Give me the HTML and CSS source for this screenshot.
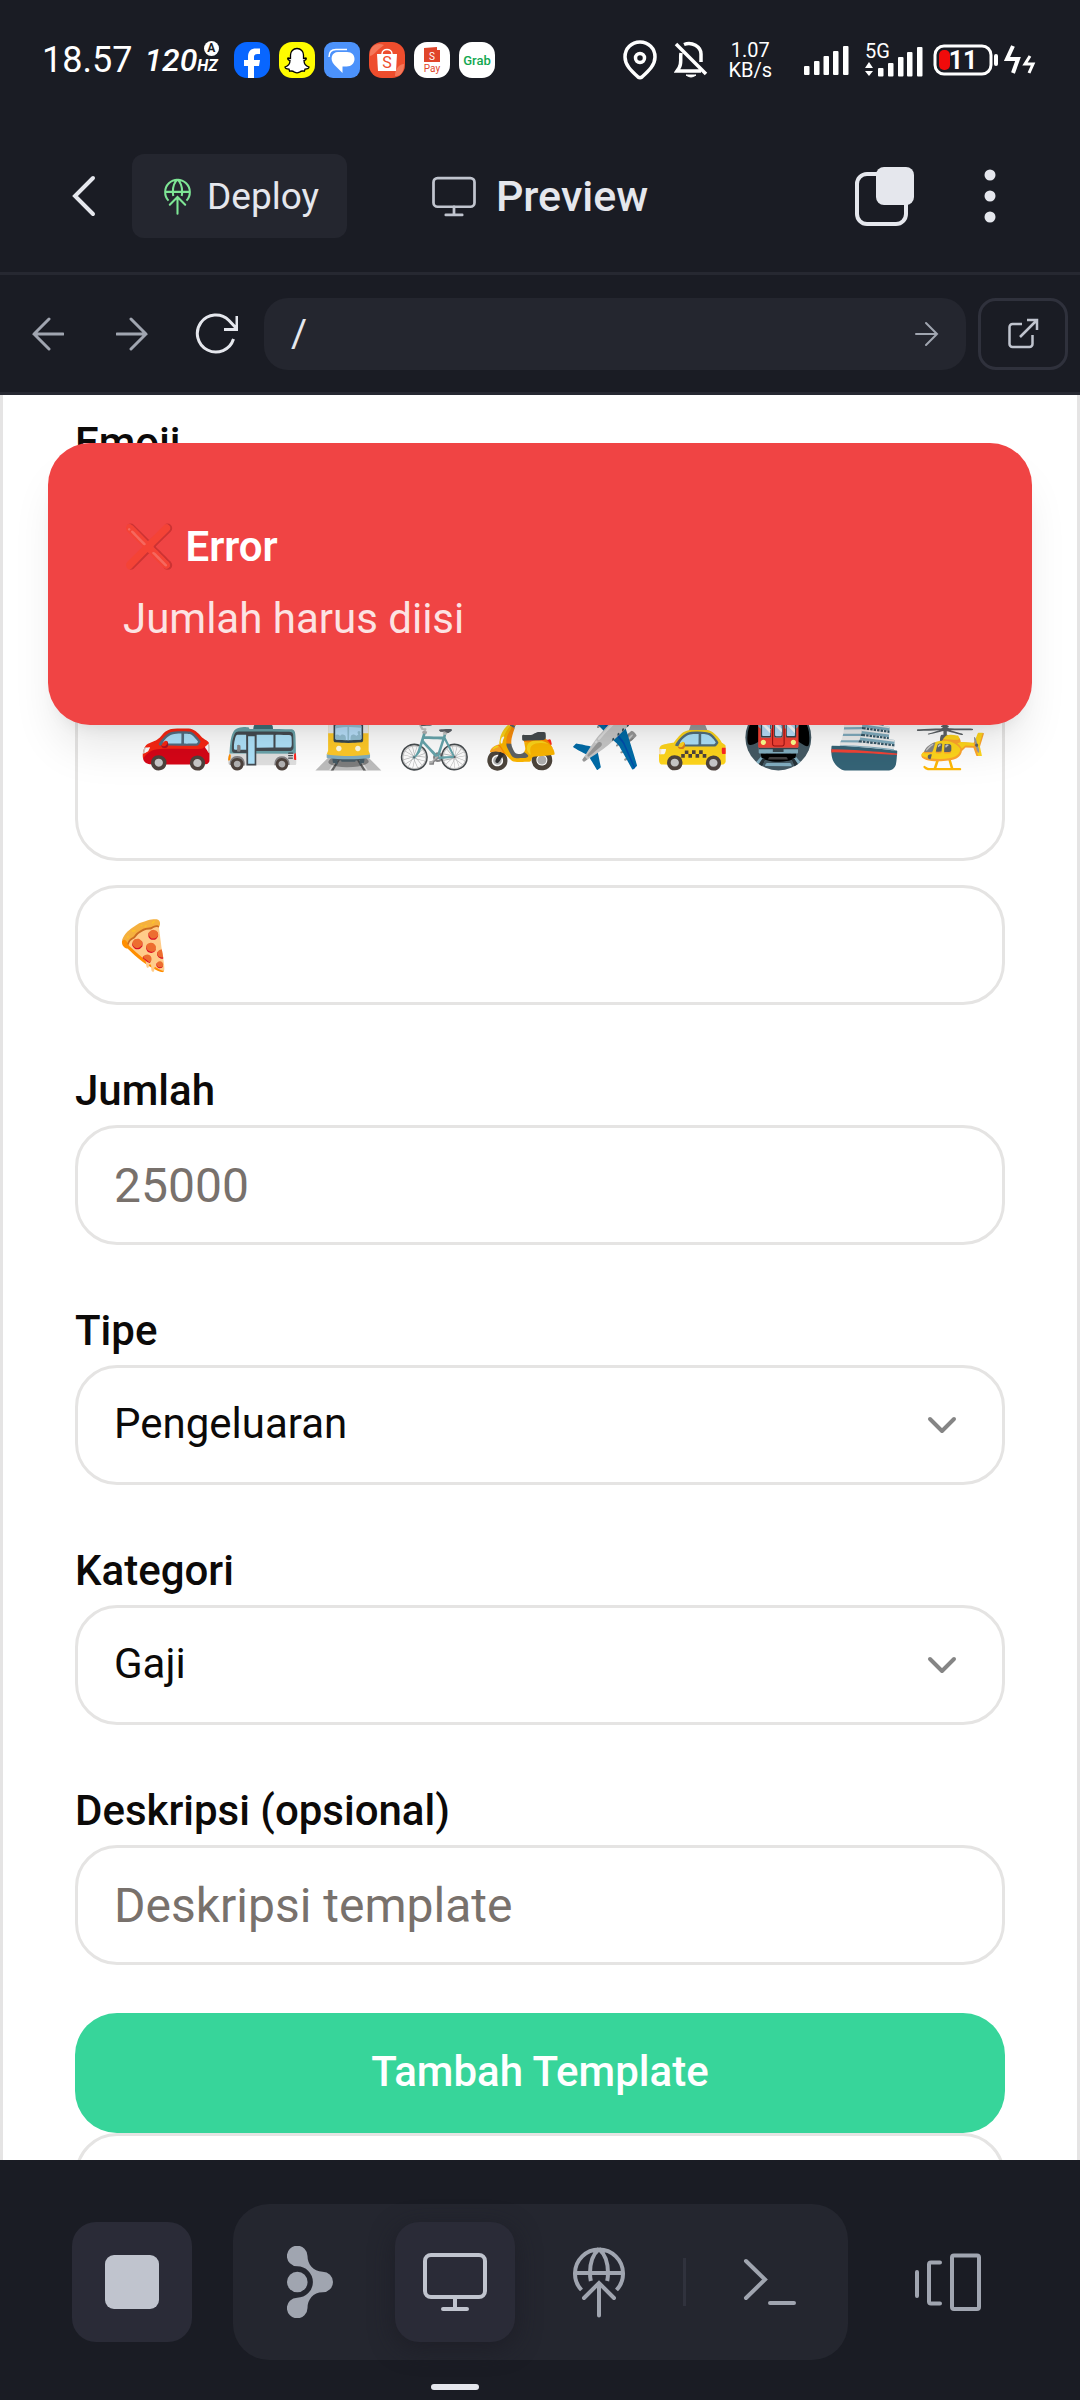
FILE: index.html
```html
<!DOCTYPE html>
<html lang="id">
<head>
<meta charset="utf-8">
<meta name="viewport" content="width=device-width, initial-scale=1">
<title>Preview</title>
<link rel="stylesheet" href="styles.css">
</head>
<body>
<svg class="defs" aria-hidden="true">
  <symbol id="globe" viewBox="0 0 52 72"><g fill="none" stroke="currentColor" stroke-width="4" stroke-linecap="round"><path stroke-linecap="butt" d="M8.5 44A24 24 0 1 1 43.5 44M2 27H50M26 3C19 9 17 18 17 27c0 3 .2 5 .8 8M26 3C33 9 35 18 35 27c0 3-.2 5-.8 8"/><path d="M26 38V69.500M11 52 26 37 41 52"/></g></symbol>
  <symbol id="monitor" viewBox="0 0 64 60"><g fill="none" stroke="currentColor" stroke-width="4" stroke-linecap="round"><rect x="2" y="3" width="60" height="42" rx="6"/><path d="M32 45V57M20 57H44"/></g></symbol>
  <symbol id="chevron" viewBox="0 0 30 18"><path d="M3 3 15 15 27 3" fill="none" stroke="currentColor" stroke-width="4" stroke-linecap="round" stroke-linejoin="round"/></symbol>
</svg>

<div class="status">
  <div class="status-side">
    <span class="clock">18.57</span>
    <span class="rate"><span class="rate-num">120</span><span class="rate-unit">HZ<span class="rate-auto">A</span></span></span>
    <span class="apps">
      <svg viewBox="0 0 36 36"><rect width="36" height="36" rx="13" fill="#0866ff"/><path d="M14 36V24H10V18H14V15C14 9 17 6.500 22 6.500h4V12H23.500C21 12 20 13 20 15v3h6l-1 6H20V36Z" fill="#fff"/></svg>
      <svg viewBox="0 0 36 36"><rect width="36" height="36" rx="13" fill="#fffc00"/><path d="M18 6.500c-4 0-6.500 3-6.500 6.500v3.500l-2.500-.5c-1 1 .5 2 2 2.500C11 21.500 9 24 6 25c0 1.500 2 2 4 2.200l.6 2c2.400-.6 3.400-.2 5 1q2.400 1.200 4.800 0c1.600-1.200 2.600-1.600 5-1l.6-2c2-.2 4-.7 4-2.200-3-1-5-3.500-5-6.500 1.500-.5 3-1.500 2-2.500l-2.500.5V13c0-3.500-2.500-6.500-6.500-6.500Z" fill="#fff" stroke="#000" stroke-width="1.300"/></svg>
      <svg viewBox="0 0 36 36"><rect width="36" height="36" rx="9" fill="#4c92fb"/><path d="M5 15C5 10 8 7.500 12 7.500H23" fill="none" stroke="#fff" stroke-width="1.500"/><path d="M14 10h9c5 0 7.500 3 7.500 7s-3 7.500-8 7.500h-4V31l-8-8C5 17 8 10 14 10Z" fill="#fff"/></svg>
      <svg viewBox="0 0 36 36"><rect width="36" height="36" rx="13" fill="#ee4d2d"/><path d="M1 14C5 13 7 9 15 3 8 0 0 4 1 14ZM35 22c-5 0-9 5-9 12 6 1 9-5 9-12Z" fill="#f5785a"/><path d="M8 12H28L27 29H9Z" fill="#fff"/><path d="M13 12C13 6 23 6 23 12" fill="none" stroke="#fff" stroke-width="1.500"/><text x="18" y="26" font-size="16" text-anchor="middle" fill="#ee4d2d">S</text></svg>
      <svg viewBox="0 0 36 36"><rect width="36" height="36" rx="13" fill="#fff"/><path d="M10 6 23 5V8H26V20H10Z" fill="#e0452b"/><text x="18" y="18" font-size="10" text-anchor="middle" fill="#fff">S</text><text x="18" y="30" font-size="10" text-anchor="middle" fill="#e0452b">Pay</text></svg>
      <svg viewBox="0 0 36 36"><rect width="36" height="36" rx="13" fill="#fff"/><text x="18" y="23" font-size="13" font-weight="500" text-anchor="middle" fill="#12a751">Grab</text></svg>
    </span>
  </div>
  <div class="status-side">
    <svg width="34" height="40" viewBox="0 0 34 40" fill="none" stroke="#fff" stroke-width="3.500"><path d="M17 2C8.500 2 2 8.500 2 17c0 8 6 13.500 13 20q2 1.500 4 0C26 30.500 32 25 32 17 32 8.500 25.500 2 17 2Z"/><circle cx="17" cy="18" r="4.500"/></svg>
    <svg class="bell" width="34" height="38" viewBox="0 0 34 38" fill="none" stroke="#fff" stroke-width="3.500"><path d="M2 3 32 33M10 3.500C18 0 27 6 27 13v8M7 12C6 18 8 23 5 27L3 30H27"/><path d="M12 34H22Q17 38 12 34" fill="#fff" stroke-width="1"/></svg>
    <span class="speed"><span>1.07</span><span>KB/s</span></span>
    <svg class="bars" width="45" height="30" viewBox="0 0 45 30" fill="#fff"><rect y="21" width="5.500" height="9" rx="1"/><rect x="10" y="16" width="5.500" height="14" rx="1"/><rect x="19.500" y="11" width="5.500" height="19" rx="1"/><rect x="29" y="6" width="5.500" height="24" rx="1"/><rect x="39" y="1" width="5.500" height="29" rx="1"/></svg>
    <svg class="net" width="58" height="40" viewBox="0 -3 58 40" fill="#fff"><text x="0" y="15" font-size="20">5G</text><path d="M0 25 4 19 8 25ZM0 28H8L4 33Z"/><rect x="13" y="25" width="5.500" height="8.500" rx="1"/><rect x="23" y="20" width="5.500" height="13.500" rx="1"/><rect x="33" y="14" width="5.500" height="19.500" rx="1"/><rect x="42" y="9" width="5.500" height="24.500" rx="1"/><rect x="52" y="4" width="5.500" height="29.500" rx="1"/></svg>
    <svg width="66" height="32" viewBox="0 0 66 32"><rect x="2" y="2" width="56" height="28" rx="9" fill="none" stroke="#fff" stroke-width="3"/><rect x="6" y="6" width="11" height="20" rx="5" fill="#f00b0b"/><rect x="61" y="10" width="4" height="12" rx="2" fill="#fff"/><text x="30" y="25" font-size="25" font-weight="700" text-anchor="middle" fill="#fff">11</text></svg>
    <svg class="bolt" width="32" height="30" viewBox="0 0 32 30" fill="none" stroke="#fff" stroke-width="4"><path d="M9 1 3 14H14L9 28"/><path d="M26 11 21 19H29L25 28" stroke-width="3"/></svg>
  </div>
</div>

<header class="header">
  <div class="header-left">
    <button class="plain" aria-label="Kembali"><svg width="24" height="42" viewBox="0 0 24 42"><path d="M21 3 3 21 21 39" fill="none" stroke="#e5e7ed" stroke-width="4" stroke-linecap="round"/></svg></button>
    <button class="deploy"><svg width="27" height="37"><use href="#globe"/></svg>Deploy</button>
  </div>
  <h1 class="title"><svg width="44" height="41"><use href="#monitor"/></svg>Preview</h1>
  <div class="header-right">
    <button class="plain" aria-label="Tab"><svg width="59" height="60" viewBox="0 0 59 60"><rect x="2" y="8" width="49" height="50" rx="10" fill="none" stroke="#e5e7ed" stroke-width="4"/><rect x="21" y="1" width="38" height="38" rx="8" fill="#e5e7ed"/></svg></button>
    <button class="plain menu" aria-label="Menu"><svg width="12" height="54" viewBox="0 0 12 54" fill="#e5e7ed"><circle cx="6" cy="6" r="5.500"/><circle cx="6" cy="27" r="5.500"/><circle cx="6" cy="48" r="5.500"/></svg></button>
  </div>
</header>

<nav class="address" aria-label="Navigasi">
  <button class="plain nav-btn" aria-label="Mundur"><svg width="32" height="34" viewBox="0 0 32 34"><path d="M17 2 2 17 17 32M2 17H31" fill="none" stroke="#a0a5b0" stroke-width="3" stroke-linecap="round"/></svg></button>
  <button class="plain nav-btn" aria-label="Maju"><svg width="32" height="34" viewBox="0 0 32 34"><path d="M15 2 30 17 15 32M30 17H1" fill="none" stroke="#a0a5b0" stroke-width="3" stroke-linecap="round"/></svg></button>
  <button class="plain nav-btn" aria-label="Muat ulang"><svg width="44" height="42" viewBox="-2 0 44 42"><path d="M37.500 26A18.500 18.500 0 1 1 33 7.500L41 16M41 3V16.500H28" fill="none" stroke="#e5e7ed" stroke-width="3"/></svg></button>
  <div class="url">
    <input class="url-input" type="text" value="/" aria-label="Alamat">
    <button class="plain" aria-label="Buka"><svg width="24" height="26" viewBox="0 0 24 26"><path d="M11 2 22 13 11 24M22 13H1" fill="none" stroke="#a0a5b0" stroke-width="2" stroke-linecap="round"/></svg></button>
  </div>
  <button class="external" aria-label="Buka di tab baru"><svg width="31" height="31" viewBox="0 0 31 31"><path d="M14 6H4.500a3 3 0 0 0-3 3V26a3 3 0 0 0 3 3H21.500a3 3 0 0 0 3-3V17M12 19 28 3M19 2H29V12" fill="none" stroke="#c0c4ce" stroke-width="2.500"/></svg></button>
</nav>

<main class="preview">
  <form class="form">
    <div class="field">
      <label class="label" for="emoji">Emoji</label>
      <div class="picker"><div class="emoji-row"><button type="button" class="plain emoji">🚗</button><button type="button" class="plain emoji">🚌</button><button type="button" class="plain emoji">🚊</button><button type="button" class="plain emoji">🚲</button><button type="button" class="plain emoji">🛵</button><button type="button" class="plain emoji">✈️</button><button type="button" class="plain emoji">🚕</button><button type="button" class="plain emoji">🚇</button><button type="button" class="plain emoji">🚢</button><button type="button" class="plain emoji">🚁</button></div></div>
      <input class="control custom-emoji" id="emoji" type="text" value="🍕">
    </div>
    <div class="field">
      <label class="label" for="jumlah">Jumlah</label>
      <input class="control" id="jumlah" type="text" inputmode="numeric" placeholder="25000">
    </div>
    <div class="field">
      <label class="label" for="tipe">Tipe</label>
      <div class="select-wrap"><select class="control select" id="tipe"><option>Pengeluaran</option></select><svg class="caret" width="30" height="18"><use href="#chevron"/></svg></div>
    </div>
    <div class="field">
      <label class="label" for="kategori">Kategori</label>
      <div class="select-wrap"><select class="control select" id="kategori"><option>Gaji</option></select><svg class="caret" width="30" height="18"><use href="#chevron"/></svg></div>
    </div>
    <div class="field">
      <label class="label" for="deskripsi">Deskripsi (opsional)</label>
      <input class="control" id="deskripsi" type="text" placeholder="Deskripsi template">
    </div>
    <button class="submit" type="button">Tambah Template</button>
    <div class="card"></div>
  </form>
  <div class="toast" role="alert">
    <p class="toast-title">❌ Error</p>
    <p class="toast-text">Jumlah harus diisi</p>
  </div>
</main>

<footer class="dock">
  <button class="tool filled" aria-label="Berhenti"><svg width="54" height="54" viewBox="0 0 54 54"><rect width="54" height="54" rx="9" fill="#c0c4ce"/></svg></button>
  <div class="dock-group">
    <button class="tool" aria-label="Agen"><svg width="47" height="72" viewBox="0 0 47 72" fill="currentColor"><circle cx="10.300" cy="36" r="10.300"/><path d="M20.500 10C20.500 18 26 25.700 35.700 25.700A10.300 10.300 0 0 1 35.700 46.300C26 46.300 20.500 54 20.500 62A10.300 10.300 0 1 1 10.200 51.700A15.700 15.700 0 0 0 10.200 20.300A10.300 10.300 0 1 1 20.500 10Z"/></svg></button>
    <button class="tool filled current" aria-label="Preview"><svg width="64" height="60"><use href="#monitor"/></svg></button>
    <button class="tool" aria-label="Deploy"><svg width="52" height="72"><use href="#globe"/></svg></button>
    <span class="divider"></span>
    <button class="tool" aria-label="Konsol"><svg width="54" height="48" viewBox="0 0 54 48"><path d="M3 3 22 21.500 3 40M27 45H51" fill="none" stroke="currentColor" stroke-width="4" stroke-linecap="round"/></svg></button>
  </div>
  <button class="tool" aria-label="Panel"><svg width="68" height="60" viewBox="0 0 68 60"><path d="M3 20V44M26 10.500H17a2 2 0 0 0-2 2V49.500a2 2 0 0 0 2 2H26M40 3.500H63a2 2 0 0 1 2 2V55a2 2 0 0 1-2 2H40a2 2 0 0 1-2-2V5.500a2 2 0 0 1 2-2" fill="none" stroke="currentColor" stroke-width="4" stroke-linecap="round"/></svg></button>
</footer>
</body>
</html>
```

FILE: styles.css
```css
* { box-sizing: border-box; }
body {
  margin: 0;
  height: 100vh;
  display: flex;
  flex-direction: column;
  background: #1a1c24;
  color: #e5e7ed;
  font-family: Roboto, "Liberation Sans", sans-serif;
  overflow: hidden;
}
button, input, select { font-family: inherit; margin: 0; }
svg { display: block; flex: none; }
.defs { position: absolute; width: 0; height: 0; }
.plain { border: 0; padding: 0; background: none; color: inherit; }

/* Status bar */
.status {
  display: flex;
  justify-content: space-between;
  align-items: center;
  height: 120px;
  padding: 0 44px 0 42px;
  color: #fff;
}
.status-side { display: flex; align-items: center; }
.clock { font-size: 36px; line-height: 40px; }
.rate { display: flex; align-items: flex-end; margin-left: 12px; font-style: italic; font-weight: 500; }
.rate-num { font-size: 32px; line-height: 36px; }
.rate-unit { position: relative; font-size: 16px; line-height: 24px; font-weight: 700; }
.rate-auto {
  position: absolute;
  right: -1px;
  bottom: 22px;
  width: 15px;
  height: 15px;
  border-radius: 50%;
  background: #fff;
  color: #1a1c24;
  font-size: 12px;
  font-style: normal;
  line-height: 15px;
  text-align: center;
}
.apps { display: flex; gap: 9px; margin-left: 16px; }
.apps svg { width: 36px; height: 36px; }
.bell { margin-left: 17px; }
.speed { display: flex; flex-direction: column; align-items: center; margin-left: 20px; font-size: 20px; line-height: 20px; }
.bars { margin-left: 32px; }
.net { margin-left: 16px; }
.net + svg { margin-left: 10px; }
.bolt { margin-left: 5px; }

/* Header */
.header {
  display: grid;
  grid-template-columns: 1fr auto 1fr;
  align-items: center;
  height: 155px;
  padding: 0 72px;
  border-bottom: 3px solid #262831;
}
.header-left { display: flex; align-items: center; gap: 36px; }
.deploy {
  display: flex;
  align-items: center;
  gap: 16px;
  height: 84px;
  padding: 0 28px 0 32px;
  border: 0;
  border-radius: 12px;
  background: #24262f;
  color: #e5e7ed;
  font-size: 37px;
}
.deploy svg { color: #7ee695; }
.title { display: flex; align-items: center; gap: 20px; margin: 0; font-size: 43px; font-weight: 500; }
.title svg { color: #c0c4ce; }
.header-right { display: flex; align-items: center; justify-content: flex-end; gap: 70px; }
.menu { padding-right: 12px; }

/* Address bar */
.address {
  display: flex;
  align-items: center;
  height: 120px;
  padding: 0 12px 0 6px;
  border-bottom: 3px solid #262831;
}
.nav-btn { width: 84px; height: 84px; display: grid; place-items: center; }
.url {
  flex: 1;
  display: flex;
  align-items: center;
  height: 72px;
  margin: 0 12px 0 6px;
  padding: 0 27px;
  border-radius: 24px;
  background: #24262f;
}
.url-input { flex: 1; min-width: 0; padding: 0; border: 0; outline: 0; background: none; color: #e5e7ed; font-size: 39px; }
.external {
  width: 90px;
  height: 72px;
  display: grid;
  place-items: center;
  padding: 0;
  border: 3px solid #2f313c;
  border-radius: 18px;
  background: none;
}

/* Previewed page */
.preview {
  position: relative;
  flex: 1;
  min-height: 0;
  overflow: hidden;
  border: solid #e5e4e4;
  border-width: 0 3px;
  background: #fff;
  color: #0c0a09;
}
.form { display: flex; flex-direction: column; gap: 56px; padding: 18px 72px 0; }
.field { display: flex; flex-direction: column; gap: 4px; }
.label { font-size: 42px; line-height: 60px; font-weight: 500; }
.picker {
  display: flex;
  align-items: flex-end;
  height: 384px;
  padding: 0 0 84px 61px;
  border: 3px solid #e5e4e3;
  border-radius: 42px;
  overflow: hidden;
}
.emoji-row { display: flex; gap: 12px; }
.emoji { width: 74px; font-size: 60px; line-height: 72px; text-align: center; }
.control {
  width: 100%;
  height: 120px;
  padding: 0 36px;
  border: 3px solid #e5e4e3;
  border-radius: 42px;
  outline: 0;
  background: #fff;
  color: #0c0a09;
  font-size: 48px;
}
.control::placeholder { color: #78716c; opacity: 1; }
.custom-emoji { margin-top: 20px; }
.select-wrap { position: relative; }
.select { display: block; appearance: none; padding-bottom: 3px; font-size: 42px; }
.caret { position: absolute; right: 48px; top: 51px; color: #858585; pointer-events: none; }
.submit {
  height: 120px;
  margin-top: -8px;
  padding: 0 0 3px;
  border: 0;
  border-radius: 42px;
  background: #37d59a;
  color: #fff;
  font-size: 42px;
  font-weight: 500;
}
.card { height: 120px; margin-top: -56px; border: 3px solid #e5e4e3; border-radius: 42px; }
.toast {
  position: absolute;
  top: 48px;
  left: 45px;
  right: 45px;
  padding: 68px 75px 70px;
  border-radius: 42px;
  background: #f04444;
  box-shadow: 0 30px 45px -9px rgba(0, 0, 0, 0.1), 0 12px 18px -12px rgba(0, 0, 0, 0.1);
  color: #fff;
  font-size: 42px;
  line-height: 72px;
}
.toast p { margin: 0; }
.toast-title { font-weight: 600; }
.toast-text { opacity: 0.85; }

/* Bottom dock */
.dock {
  display: flex;
  align-items: flex-start;
  justify-content: space-between;
  height: 240px;
  padding: 44px 72px 0;
}
.dock > .tool { margin-top: 18px; }
.dock-group { display: flex; align-items: center; gap: 24px; padding: 18px; border-radius: 36px; background: #24262f; }
.tool {
  position: relative;
  width: 120px;
  height: 120px;
  display: grid;
  place-items: center;
  padding: 0;
  border: 0;
  border-radius: 24px;
  background: none;
  color: #a0a5b0;
}
.filled { background: #2a2b37; color: #c0c4ce; }
.current { box-shadow: 0 6px 24px rgba(27, 27, 35, 0.7); }
.current::after {
  content: "";
  position: absolute;
  bottom: -48px;
  left: 36px;
  width: 48px;
  height: 6px;
  border-radius: 3px;
  background: #e5e7ed;
}
.divider { width: 3px; height: 48px; background: #30323d; }
```
